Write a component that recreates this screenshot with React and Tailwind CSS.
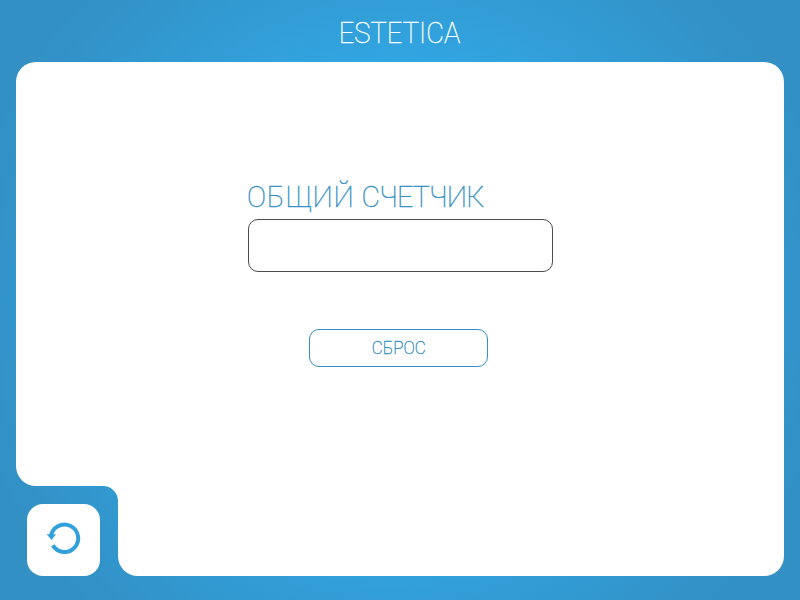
function BackIcon() {
  return (
    <svg width="37" height="36" viewBox="0 0 37 36" fill="none" aria-hidden="true">
      <path d="M5.9 16.5A13.7 13.7 0 1 1 7.8 25.4" stroke="#32a0da" strokeWidth="4" />
      <path d="M1.6 14.3H11L6.6 19.9Z" fill="#32a0da" />
    </svg>
  );
}

function NotchCorner() {
  return (
    <svg className="shrink-0" width="15" height="15" viewBox="0 0 15 15" aria-hidden="true">
      <path d="M0 0H15V15A15 15 0 0 0 0 0Z" fill="#fff" />
    </svg>
  );
}

export default function App() {
  return (
    <div className="flex h-[600px] w-[800px] flex-col overflow-hidden bg-[radial-gradient(circle_at_50%_50%,#30a8e8_0px,#31a6e4_230px,#329dd6_300px,#3295cb_385px,#3290c4_440px)] px-4 pb-6 font-['Roboto',sans-serif]">
      <header className="flex h-[62px] shrink-0 justify-center pt-[13px]">
        <h1 className="origin-center scale-x-[0.927] text-[29.5px] leading-10 font-thin whitespace-nowrap text-white [-webkit-text-stroke:0.4px_#fff]">
          ESTETICA
        </h1>
      </header>

      <main className="flex h-[424px] shrink-0 flex-col items-center rounded-t-[20px] rounded-bl-[20px] bg-white pt-[115px]">
        <label className="flex w-[305px] flex-col">
          <span className="ml-[-1px] h-[42px] origin-left scale-x-[0.97] self-start text-[29.5px] leading-10 font-thin whitespace-nowrap text-[#3290c4] [-webkit-text-stroke:0.4px_#3290c4]">
            <span className="tracking-[0.8px]">ОБЩИЙ</span> <span className="tracking-[-0.8px]">СЧЕТЧИК</span>
          </span>
          <input
            type="text"
            readOnly
            className="h-[53px] w-[305px] rounded-[10px] border border-[#4b4b4d] bg-white outline-none"
          />
        </label>
        <button
          type="button"
          className="mt-[57px] mr-[3px] flex h-[38px] w-[179px] items-center justify-center rounded-[10px] border border-[#3290c4] pb-0.5 text-[#3290c4]"
        >
          <span className="scale-x-[0.94] text-[18px] font-thin [-webkit-text-stroke:0.4px_#3290c4]">СБРОС</span>
        </button>
      </main>

      <footer className="flex h-[90px] shrink-0">
        <div className="flex w-[102px] shrink-0 justify-between">
          <button
            type="button"
            aria-label="Назад"
            className="mt-[18px] -mr-4 ml-[11px] flex h-[72px] w-[73px] shrink-0 items-center justify-center rounded-2xl bg-white pb-1"
          >
            <BackIcon />
          </button>
          <NotchCorner />
        </div>
        <div className="flex-1 rounded-b-[20px] bg-white" />
      </footer>
    </div>
  );
}
